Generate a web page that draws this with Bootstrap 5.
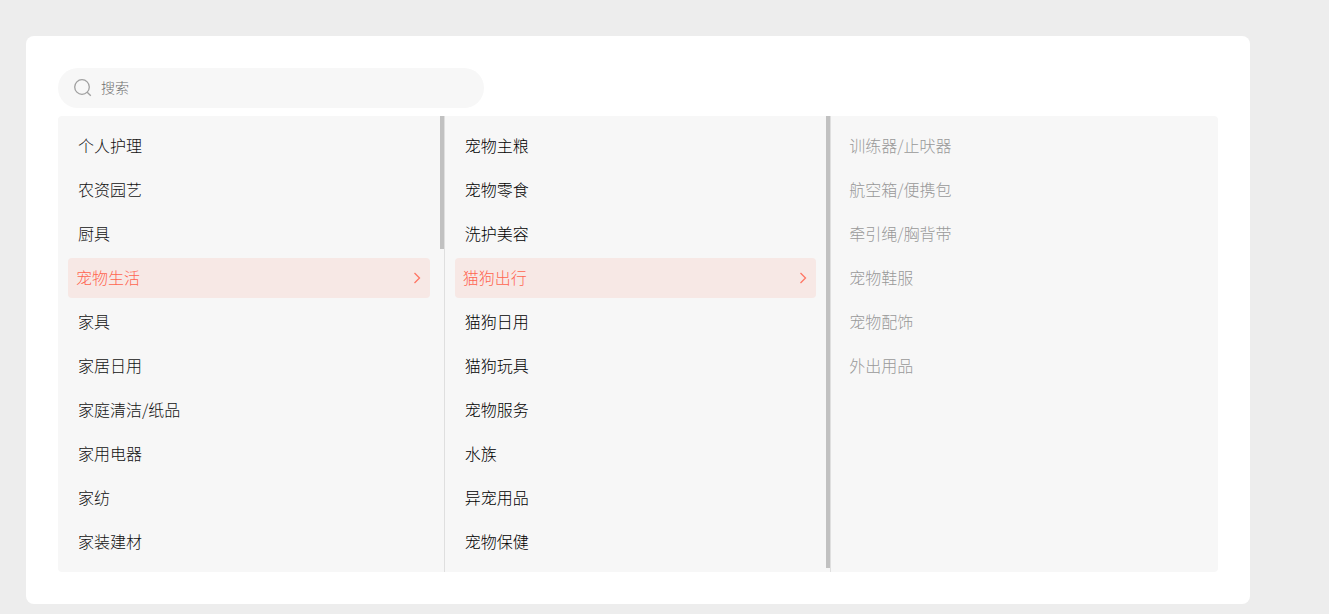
<!DOCTYPE html>
<html lang="zh-CN">
<head>
<meta charset="utf-8">
<title>类目选择</title>
<link href="https://cdn.jsdelivr.net/npm/bootstrap@5.3.0/dist/css/bootstrap.min.css" rel="stylesheet">
<style>
html,body{height:100%;overflow:hidden}
body{background:#ededed;font-family:"Noto Sans CJK SC","Liberation Sans",sans-serif;font-size:16px;font-weight:300;color:#111}
.sheet{width:1224px;height:568px;margin:36px 0 0 26px;padding:32px;background:#fff;border-radius:8px}
.finder{width:426px;height:40px;margin-bottom:8px;padding-left:16px;background:#f7f7f7;border-radius:20px}
.finder svg{flex:none;margin-right:9px}
.finder input{border:0;outline:0;padding:0 0 2px;background:transparent;width:100%;font-size:14px;font-family:inherit;font-weight:300;color:#333}
.finder input::placeholder{color:#6e6e6e;opacity:1}
.panel{height:456px;background:#f7f7f7;border-radius:4px;overflow:hidden}
.pane{position:relative;height:456px;padding:10px 14px 0 10px;overflow:hidden}
.pane-rule{border-right:1px solid #dfdfdf}
.thumb{position:absolute;top:0;right:0;width:4px;background:#c1c1c1}
.thumb-short{height:133px}
.thumb-long{height:452px}
.entry{height:40px;margin-bottom:4px;padding:0 9px 2px 10px;border-radius:4px;line-height:38px;white-space:nowrap}
.pane-dark .entry{color:#000}
.pane-muted{padding-left:8px}
.pane-muted .entry{color:#999}
.pane .entry-on{padding-left:8px;background:#f7e8e5;color:#ff6550}
.entry-on svg{margin-top:2px}
</style>
</head>
<body>
<div class="sheet">
  <div class="finder d-flex align-items-center">
    <svg width="18" height="18" viewBox="0 0 18 18" fill="none" stroke="#a0a0a0" stroke-width="1.3" aria-hidden="true"><circle cx="8" cy="8" r="7.3"/><path d="M13.2 13.2l3.6 3.6"/></svg>
    <input type="text" placeholder="搜索" aria-label="搜索">
  </div>
  <div class="panel row g-0">
    <div class="col-4 pane pane-rule">
      <div class="entry">个人护理</div>
      <div class="entry">农资园艺</div>
      <div class="entry">厨具</div>
      <div class="entry entry-on d-flex justify-content-between align-items-center"><span>宠物生活</span><svg width="8" height="12" viewBox="0 0 8 12" fill="none" stroke="#ff7563" stroke-width="1.3" aria-hidden="true"><path d="M1.5 1l5 5-5 5"/></svg></div>
      <div class="entry">家具</div>
      <div class="entry">家居日用</div>
      <div class="entry">家庭清洁/纸品</div>
      <div class="entry">家用电器</div>
      <div class="entry">家纺</div>
      <div class="entry">家装建材</div>
      <div class="thumb thumb-short"></div>
    </div>
    <div class="col-4 pane pane-rule pane-dark">
      <div class="entry">宠物主粮</div>
      <div class="entry">宠物零食</div>
      <div class="entry">洗护美容</div>
      <div class="entry entry-on d-flex justify-content-between align-items-center"><span>猫狗出行</span><svg width="8" height="12" viewBox="0 0 8 12" fill="none" stroke="#ff7563" stroke-width="1.3" aria-hidden="true"><path d="M1.5 1l5 5-5 5"/></svg></div>
      <div class="entry">猫狗日用</div>
      <div class="entry">猫狗玩具</div>
      <div class="entry">宠物服务</div>
      <div class="entry">水族</div>
      <div class="entry">异宠用品</div>
      <div class="entry">宠物保健</div>
      <div class="thumb thumb-long"></div>
    </div>
    <div class="col-4 pane pane-muted">
      <div class="entry">训练器/止吠器</div>
      <div class="entry">航空箱/便携包</div>
      <div class="entry">牵引绳/胸背带</div>
      <div class="entry">宠物鞋服</div>
      <div class="entry">宠物配饰</div>
      <div class="entry">外出用品</div>
    </div>
  </div>
</div>
<script src="https://cdn.jsdelivr.net/npm/bootstrap@5.3.0/dist/js/bootstrap.bundle.min.js"></script>
</body>
</html>
